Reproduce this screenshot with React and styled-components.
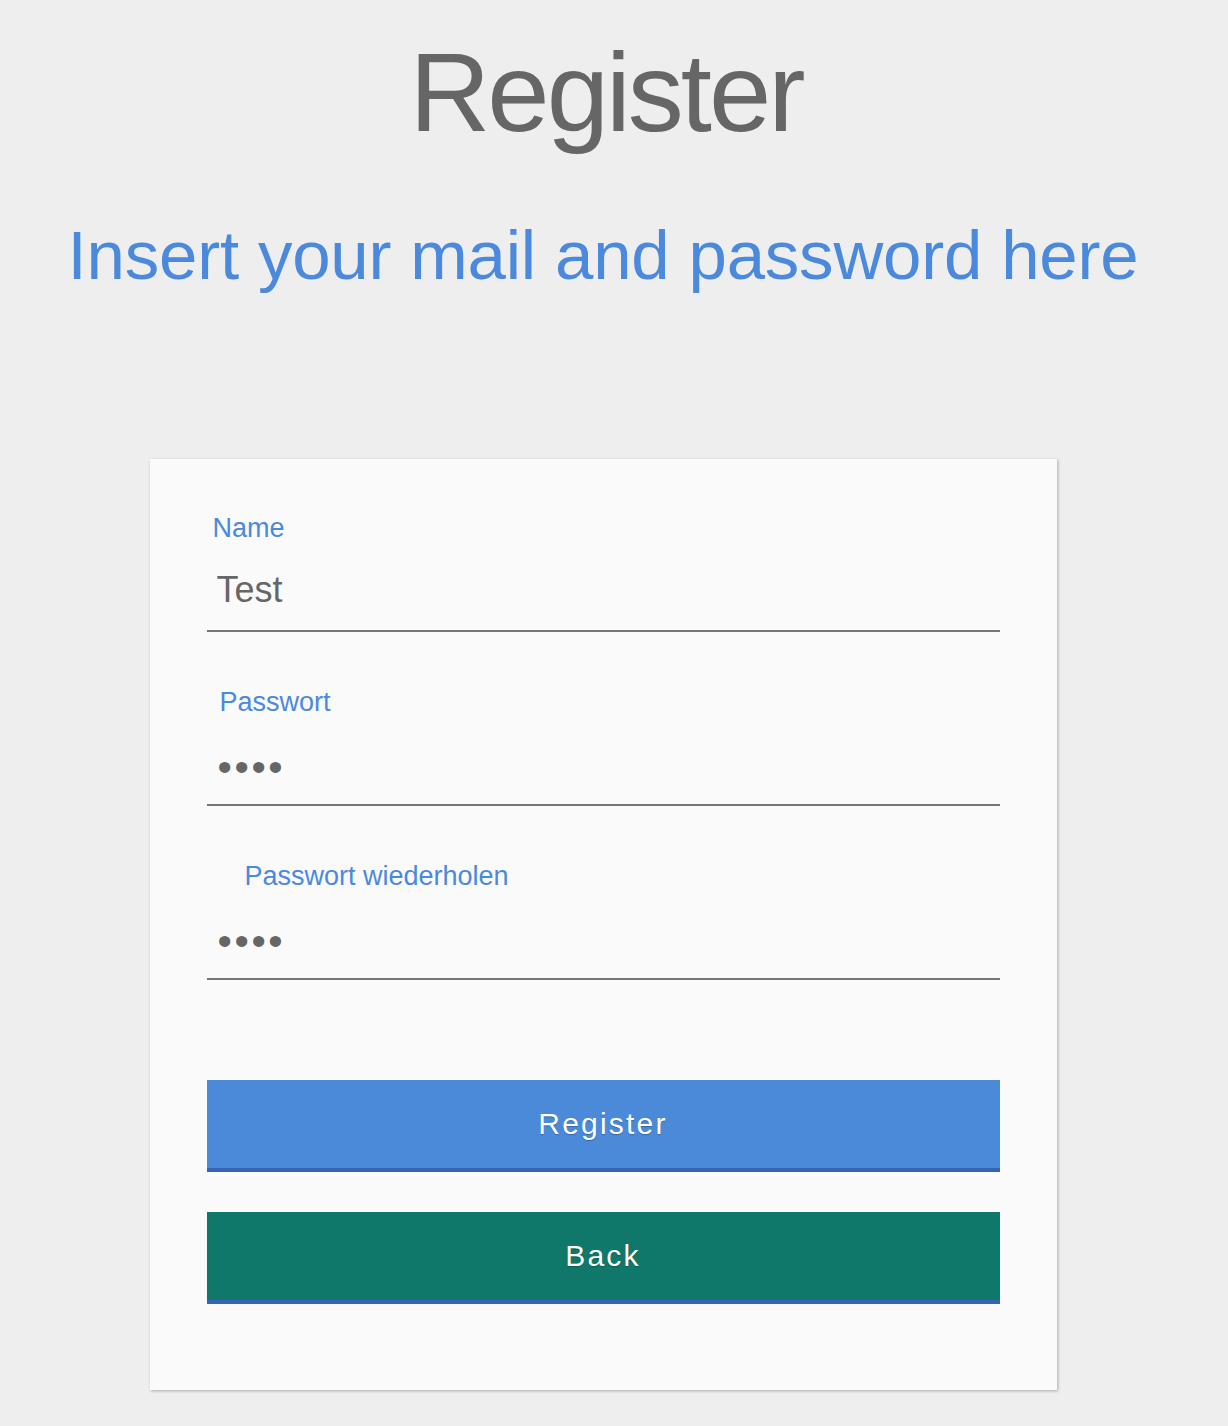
import React from "react";
import styled, { createGlobalStyle } from "styled-components";

const GlobalStyle = createGlobalStyle`
  html, body {
    margin: 0;
    padding: 0;
    background: #eeeeee;
  }
  body {
    font-family: "Liberation Sans", Arial, sans-serif;
  }
  * { box-sizing: border-box; }
`;

const Page = styled.div`
  width: 1206px;
  min-height: 1426px;
  display: flex;
  flex-direction: column;
  align-items: center;
  padding-top: 37px;
`;

const Title = styled.h1`
  margin: 0;
  font-family: "Liberation Sans", Arial, sans-serif;
  font-weight: 400;
  font-size: 112px;
  line-height: 112px;
  letter-spacing: -3px;
  color: #666666;
  padding-left: 6px;
`;

const Subtitle = styled.h2`
  margin: 72px 0 0;
  font-family: "Liberation Sans", Arial, sans-serif;
  font-weight: 400;
  font-size: 69px;
  line-height: 69px;
  letter-spacing: -0.2px;
  color: #4a89dc;
`;

const Card = styled.form`
  margin-top: 169px;
  width: 907px;
  background: #fafafa;
  box-shadow: 1px 1px 3px rgba(0, 0, 0, 0.28);
  padding: 53px 57px 86px;
  display: flex;
  flex-direction: column;
`;

const Field = styled.label`
  display: flex;
  flex-direction: column;
  & + & {
    margin-top: 54px;
  }
`;

const Label = styled.span`
  font-size: 27px;
  line-height: 32px;
  color: #4a89dc;
  padding-left: ${(p) => p.$indent}px;
`;

const Input = styled.input`
  margin-top: 24px;
  width: 100%;
  border: none;
  border-bottom: 2px solid #767676;
  background: transparent;
  outline: none;
  font-family: "Liberation Sans", Arial, sans-serif;
  font-size: 36px;
  line-height: 44px;
  height: 64px;
  padding: 0 0 18px 10px;
  color: #666666;

  &[type="password"] {
    font-size: 41px;
    letter-spacing: 2.6px;
    padding: 3px 0 15px 11px;
  }
`;

const Buttons = styled.div`
  margin-top: 100px;
  display: flex;
  flex-direction: column;
  gap: 40px;
`;

const Button = styled.button`
  width: 100%;
  height: 92px;
  border: none;
  border-bottom: 4px solid #3763b5;
  background: ${(p) => p.$bg};
  color: #ffffff;
  font-family: "Liberation Sans", Arial, sans-serif;
  font-size: 30px;
  letter-spacing: 2.2px;
  text-shadow: 0 1px 1px rgba(0, 0, 0, 0.25);
  padding: 0;
  cursor: pointer;
`;

export default function App() {
  return (
    <>
      <GlobalStyle />
      <Page>
        <Title>Register</Title>
        <Subtitle>Insert your mail and password here</Subtitle>
        <Card onSubmit={(e) => e.preventDefault()}>
          <Field>
            <Label $indent={6}>Name</Label>
            <Input type="text" defaultValue="Test" />
          </Field>
          <Field>
            <Label $indent={13}>Passwort</Label>
            <Input type="password" defaultValue="test" />
          </Field>
          <Field>
            <Label $indent={38}>Passwort wiederholen</Label>
            <Input type="password" defaultValue="test" />
          </Field>
          <Buttons>
            <Button type="submit" $bg="#4b8ad9">Register</Button>
            <Button type="button" $bg="#10786a">Back</Button>
          </Buttons>
        </Card>
      </Page>
    </>
  );
}
